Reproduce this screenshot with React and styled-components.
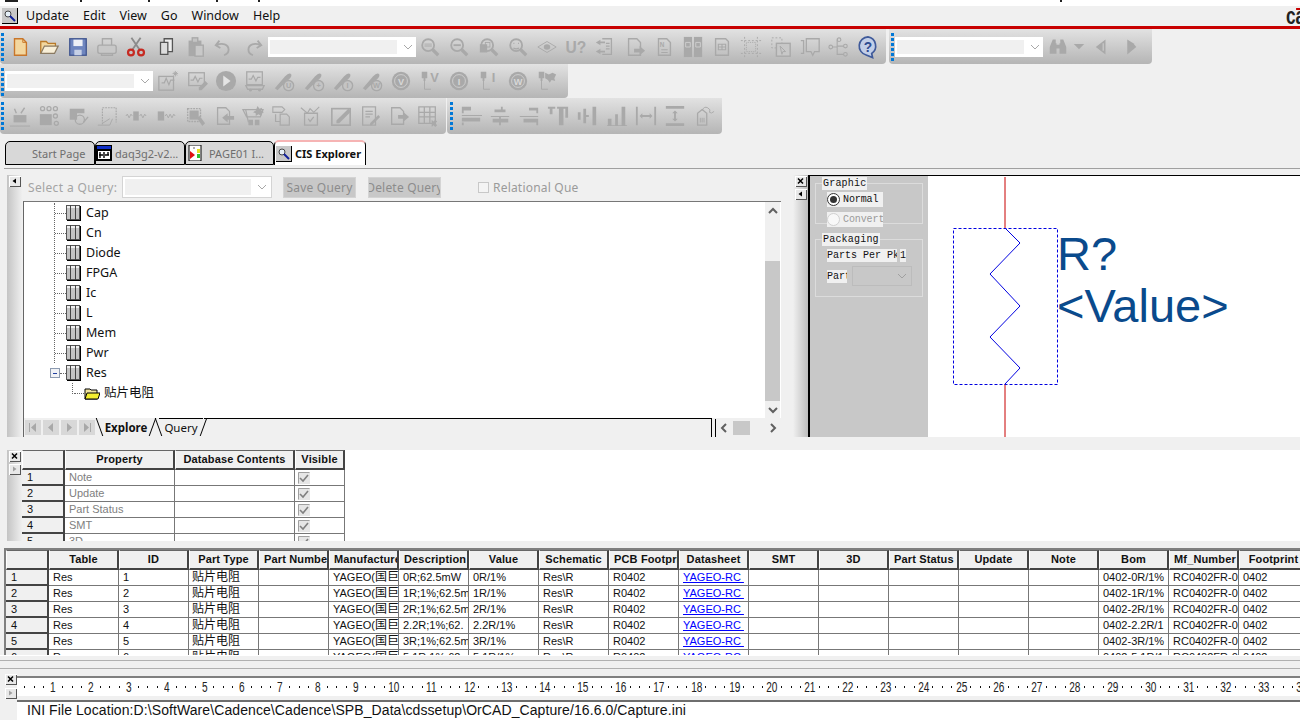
import React from 'react';
import styled, {createGlobalStyle} from 'styled-components';

const UI = `"Noto Sans", "Noto Sans CJK SC", sans-serif`;
const ARIAL = `"Liberation Sans", "Noto Sans CJK SC", sans-serif`;
const MONO = `"Liberation Mono", monospace`;

const Global = createGlobalStyle`
	html, body {margin: 0; padding: 0; background: #f0f0f0;}
	#root {width: 1300px; height: 720px; overflow: hidden;}
`;

/* icons */
const Solid = props => <path fill="currentColor" stroke="none" {...props} />;
const Letter = ({x = 12, y = 16, s = 12, fill = '#f0f0f0', children}) => (
	<text x={x} y={y} fontSize={s} fontWeight="700" textAnchor="middle" fontFamily="Liberation Sans, sans-serif" fill={fill} stroke="none">{children}</text>
);
const Glass = ({children}) => (
	<>
		<circle cx="10" cy="10" r="6.5" strokeWidth="2" />
		<path d="M15 15l6 6" strokeWidth="3.5" />
		{children}
	</>
);
const Probe = ({label}) => (
	<>
		<Solid d="M2 20L13 7q5-5 7-2q1 3-5 7L5 22z" />
		<circle cx="17" cy="17" r="5.5" fill="#c4c4c4" strokeWidth="1.5" />
		<Letter x={17} y={20} s={8} fill="#a9a9a9">{label}</Letter>
	</>
);
const Ball = ({label}) => (
	<>
		<circle cx="12" cy="12" r="10" fill="currentColor" stroke="none" />
		<circle cx="12" cy="12" r="7" strokeWidth="1" stroke="#d0d0d0" />
		<Letter y={16} s={10} fill="#d8d8d8">{label}</Letter>
	</>
);
const Marker = ({children}) => (
	<>
		<Solid d="M3 2h6v7H7v3H5V9H3z" />
		<path d="M6 12v9h7" strokeWidth="1" />
		{children}
	</>
);
const Wave = () => <path d="M5 14h3l2-5 3 7 2-5h4" strokeWidth="1.3" />;
const Page = () => <path d="M6 3h9l4 4v14H6z" strokeWidth="1.5" />;

const ICONS = {
	newFile: <><path d="M6 3h9l4 4v14H6z" fill="#f3d79f" stroke="#c8762a" strokeWidth="1.5" /><path d="M15 3v4h4" stroke="#c8762a" /></>,
	open: <><path d="M3 19V6h6l2 2h8v3" fill="#f3d79f" stroke="#b97a2a" strokeWidth="1.4" /><path d="M3 19l4-8h15l-4 8z" fill="#f8efd8" stroke="#8a7a62" strokeWidth="1.4" /></>,
	save: <><rect x="3" y="3" width="18" height="18" fill="#6f86bf" stroke="#40558f" strokeWidth="1.4" /><rect x="7" y="4" width="10" height="7" fill="#eef0f6" stroke="none" /><rect x="8" y="15" width="8" height="6" fill="#c6d0e6" stroke="none" /></>,
	print: <><path d="M7 10V3h10v7" strokeWidth="1.5" /><rect x="2" y="10" width="20" height="9" rx="2" fill="#c8c8c8" strokeWidth="1.5" /><path d="M6 19v2h12v-2" strokeWidth="1.5" /></>,
	cut: <><path d="M7 2l9 13M17 2L8 15" stroke="#8b8b8b" strokeWidth="2" /><circle cx="6.5" cy="18" r="3.2" stroke="#c62a22" strokeWidth="2.4" /><circle cx="17.5" cy="18" r="3.2" stroke="#c62a22" strokeWidth="2.4" /></>,
	copy: <g stroke="#555"><path d="M10 3h9v14H10z" fill="#eee" strokeWidth="1.4" /><path d="M6 7h8v13H6z" fill="#ddd" strokeWidth="1.4" /></g>,
	paste: <><path d="M5 5h14v17H5z" fill="currentColor" stroke="none" /><rect x="9" y="2" width="6" height="5" strokeWidth="1.5" fill="#c4c4c4" /><rect x="12" y="10" width="9" height="12" fill="#c8c8c8" strokeWidth="1.5" /></>,
	undo: <path d="M7 5L3 10l5 3M4 10c6-3 13-1 13 5 0 3-2 5-5 6" strokeWidth="2" />,
	redo: <path d="M17 5l4 5-5 3M20 10c-6-3-13-1-13 5 0 3 2 5 5 6" strokeWidth="2" />,
	zoom: <Glass><Solid d="M6 8h8v4H6z" opacity=".5" /></Glass>,
	zoomOut: <Glass><Solid d="M6 9h8v2H6z" /></Glass>,
	zoomArea: <Glass><rect x="2" y="9" width="8" height="9" fill="currentColor" stroke="none" /><rect x="8" y="7" width="5" height="5" strokeWidth="1" /></Glass>,
	zoomFit: <Glass><rect x="7" y="7" width="6" height="6" strokeWidth="1.2" /></Glass>,
	zoomAll: <Glass><path d="M7 8h1M12 8h1M7 13q3 2 6 0" strokeWidth="1.4" /></Glass>,
	eye: <><path d="M2 12l10-6 10 6-10 6z" strokeWidth="1" /><ellipse cx="12" cy="12" rx="3.5" ry="3" fill="currentColor" stroke="none" /></>,
	uRef: <Letter y={18} s={17} fill="currentColor">U?</Letter>,
	netlist: <><path d="M9 3h10v17H9" strokeWidth="1.4" /><Solid d="M2 7l5-3v2h5v2H7v2zM2 17l5-3v2h5v2H7v2z" /><path d="M13 8h4M13 11h4M13 14h4" strokeWidth="1.2" /></>,
	pageArrow: <><path d="M5 3h9l4 4v14H5z" strokeWidth="1.5" /><Solid d="M11 14h6v-3l6 5-6 5v-3h-6z" /></>,
	note: <><Page /><Letter x={10} y={12} s={7} fill="currentColor">N</Letter><path d="M9 15h7M9 18h7" strokeWidth="1.2" /></>,
	chips: <><rect x="2" y="1" width="9" height="22" fill="currentColor" stroke="none" /><rect x="13" y="1" width="9" height="22" fill="currentColor" stroke="none" /><path d="M4 7h5v5H4zM15 7h5v5h-5z" stroke="#d0d0d0" strokeWidth="1" /></>,
	docTable: <><path d="M5 3h11l3 3v15H5z" strokeWidth="1.5" /><path d="M8 9h8v6H8zM8 12h8M12 9v6" strokeWidth="1.2" /></>,
	dotGrid: <><path d="M1 5h22M1 19h22M5 1v22M19 1v22" strokeWidth="1" strokeDasharray="2 2" /><rect x="7" y="7" width="10" height="10" strokeWidth="1" strokeDasharray="1 1" /></>,
	dashPage: <><rect x="2" y="2" width="11" height="11" strokeWidth="1" strokeDasharray="2 2" /><rect x="7" y="8" width="15" height="14" fill="#c8c8c8" strokeWidth="1.5" /><path d="M11 11l6 6-3 0-1 3z" strokeWidth="1" /></>,
	brace: <><path d="M2 5h3v14H2M8 3h14v14h-5l-2 4-2-4H8z" strokeWidth="1.4" /></>,
	tree: <><circle cx="12" cy="4" r="2" strokeWidth="1.2" /><circle cx="19" cy="11" r="2" strokeWidth="1.2" /><circle cx="19" cy="20" r="2" strokeWidth="1.2" /><circle cx="3" cy="12" r="2" strokeWidth="1.2" /><path d="M5 12h5M10 4v16h7M10 11h7M10 4h1" strokeWidth="1.2" /></>,
	help: <><path d="M12 1a10 10 0 0 0-2 19.7l7 2.8-1-4.4A10 10 0 0 0 12 1z" fill="#c3cfe8" stroke="#3f5a9a" strokeWidth="1.8" /><Letter y={17} s={15} fill="#2f4a90">?</Letter></>,
	binoculars: <Solid d="M5 2h4v5h1v14H1V12zM15 2h4l4 10v9h-9V7h1zM10 9h4v5h-4z" />,
	dropDown: <Solid d="M3 7h18l-9 9z" />,
	prevFind: <><Solid d="M18 2v20L5 12z" /><path d="M15 7v10" stroke="#c4c4c4" strokeWidth="2" /></>,
	nextFind: <Solid d="M7 2l8 5 4 5-12 10z" />,
	waveNew: <><rect x="2" y="7" width="16" height="15" strokeWidth="1.4" /><Wave /><path d="M20 1v6M17 4h6M18 2l4 4M22 2l-4 4" strokeWidth="1" /></>,
	waveEdit: <><rect x="3" y="3" width="17" height="14" strokeWidth="1.4" /><path d="M5 11h3l2-4 3 6 2-4h3" strokeWidth="1.3" /><Solid d="M14 19l7-7 3 3-7 7h-3z" /></>,
	play: <><circle cx="12" cy="12" r="11" fill="currentColor" stroke="none" /><path d="M9 6l8 6-8 6z" fill="#e4e4e4" stroke="none" /></>,
	waveCart: <><rect x="3" y="2" width="17" height="14" strokeWidth="1.4" /><path d="M5 10h3l2-4 3 6 2-4h3" strokeWidth="1.3" /><path d="M2 17h20l-2 4H4z" strokeWidth="1.4" /><circle cx="7" cy="22" r="1.5" fill="currentColor" stroke="none" /><circle cx="17" cy="22" r="1.5" fill="currentColor" stroke="none" /></>,
	probeU: <Probe label="U" />,
	probePlus: <Probe label="+" />,
	probeI: <Probe label="I" />,
	probeW: <Probe label="W" />,
	ballV: <Ball label="V" />,
	ballI: <Ball label="I" />,
	ballW: <Ball label="W" />,
	markV: <Marker><Letter x={17} y={13} s={14} fill="currentColor">V</Letter></Marker>,
	markI: <Marker><Letter x={17} y={13} s={14} fill="currentColor">I</Letter></Marker>,
	markF: <Marker><Solid d="M10 3l4 2 4-2 4 2-2 4 1 3-4-1-2 3-2-3-3-2z" /></Marker>,
	basket: <><Solid d="M5 11h14v8H5z" /><path d="M8 9l-2-5M13 9l4-6" strokeWidth="1.5" /><path d="M1 23h22" strokeWidth="1" /></>,
	blocks: <><Solid d="M2 10h13v12H2z" /><circle cx="5" cy="4" r="2.2" strokeWidth="1.4" /><circle cx="12" cy="4" r="2.2" strokeWidth="1.4" /><circle cx="19" cy="4" r="2.2" strokeWidth="1.4" /><circle cx="19" cy="12" r="2.2" strokeWidth="1.4" /><circle cx="20" cy="20" r="2.2" strokeWidth="1.4" /></>,
	blockPen: <><Solid d="M3 4h16v5H11v7H3z" /><circle cx="14" cy="16" r="5" strokeWidth="1.4" /><path d="M18 19l5-6" strokeWidth="1.5" /></>,
	dashedBox: <><path d="M7 21V3h15v16" strokeWidth="1.3" strokeDasharray="2 1" /><path d="M2 22h13l3-7" strokeWidth="1" /><path d="M7 20l8-5" strokeWidth="1" /></>,
	chain: <><Solid d="M9 7h6v10H9z" /><path d="M1 12l1.5-2 2 4 2-4 1.5 2M16 12l1.5-2 2 4 2-4 1.5 2" strokeWidth="1" /></>,
	chainShort: <><Solid d="M3 7h7v10H3z" /><path d="M11 12l1.5-2 2 4 2-4 2 4 2-4 1.5 2" strokeWidth="1" /></>,
	chipPat: <><path d="M4 4h14v14H4z" strokeDasharray="2 1" strokeWidth="1.5" /><Solid d="M6 6h10v10H6z" /><Solid d="M14 14l3-2 6 8-3 3z" /></>,
	pageIn: <><path d="M5 3h9l4 4v14H5z" strokeWidth="1.4" /><Solid d="M23 12v4h-7v3l-6-5 6-5v3z" /></>,
	cart: <><path d="M1 5h22l-3 8H5zM4 5l3 14" strokeWidth="1.3" /><Solid d="M7 16h5v6H7zM14 16h5v6h-5z" /><Solid d="M17 1l2 3 3-1-1 3 3 2-3 1 0 3-3-2-3 2 0-3-3-1 3-2z" /></>,
	tagPages: <><path d="M2 2h10l3 3-3 3H2z" strokeWidth="1.2" /><path d="M10 10h7l3 3v9H10zM5 10v8h5" strokeWidth="1.3" /></>,
	antenna: <><path d="M5 9h14v13H5z" strokeWidth="1.4" /><path d="M1 3l7 6 3-5 4 4 6-6" strokeWidth="1.2" /><path d="M9 15l2 3 4-5" strokeWidth="1.4" /></>,
	penBox: <><rect x="2" y="4" width="20" height="18" strokeWidth="1.8" /><Solid d="M7 17L20 4l3 3-13 13H7z" /></>,
	notePen: <><path d="M4 2h14v20H4z" strokeWidth="1.4" /><path d="M7 7h8M7 10h8M7 13h5" strokeWidth="1.2" /><Solid d="M12 20l9-9 2 2-9 9h-2z" /></>,
	pageOut: <><path d="M4 3h9l4 4v14H4z" strokeWidth="1.4" /><Solid d="M11 11h6V8l6 5-6 5v-3h-6z" /></>,
	tableX: <><path d="M2 2h18v18H2zM2 8h18M2 13h18M8 2v18M14 2v18" strokeWidth="1.4" /><Solid d="M16 16l2 2 2-2 2 2-2 2 2 2-2 2-2-2-2 2z" /></>,
	alignLeft: <Solid d="M2 2h10v4H4v3H2zM2 11h22v1H2zM2 14h20v4H2zM2 19h2v3H2z" />,
	alignCenter: <Solid d="M6 5h7V2h2v3h3v3H6zM2 12h20v1H2zM4 15h7v-2h2v2h8v4H4zM11 19h2v3h-2z" />,
	alignRight: <Solid d="M12 3h10v3H12zM20 6h2v3h-2zM2 12h20v1H2zM6 15h16v4H6zM20 19h2v3h-2z" />,
	alignTop: <Solid d="M1 2h8v2H1zM11 2h12v2H11zM3 4h3v6H3zM13 4h5v18h-5zM20 4h3v10h-3z" />,
	alignMid: <Solid d="M2 8h3v8H2zM8 4h3v16H8zM11 11h3v2h-3zM18 2h4v20h-4z" />,
	alignBottom: <Solid d="M2 15h4v7H2zM10 10h3v12h-3zM17 2h4v20h-4zM1 22h22v1H1z" />,
	hSpace: <><Solid d="M1 2h2v20H1zM21 2h2v20h-2z" /><Solid d="M5 12l3-3v2h8V9l3 3-3 3v-2H8v2z" /></>,
	vSpace: <><Solid d="M2 1h20v3H2zM2 20h20v3H2z" /><Solid d="M12 6l3 3h-2v6h2l-3 3-3-3h2V9H9z" /></>,
	tag: <><path d="M5 9l5-4 5 4v13H5z" strokeWidth="1.4" /><path d="M8 14v5M10 14v5M12 14v5" strokeWidth="1" /><path d="M10 6q2-5 6-3t2 5q2 2 5-1" strokeWidth="1" /></>,
};

const ROW_ONE_LEFT = ['newFile', 'open', 'save', 'print', 'cut', 'copy', 'paste', 'undo', 'redo'];
const ROW_ONE_RIGHT = ['zoom', 'zoomOut', 'zoomArea', 'zoomAll', 'eye', 'uRef', 'netlist', 'pageArrow', 'note', 'chips', 'docTable', 'dotGrid', 'dashPage', 'brace', 'tree', 'help'];
const ROW_TWO = ['waveNew', 'waveEdit', 'play', 'waveCart', 'probeU', 'probePlus', 'probeI', 'probeW', 'ballV', 'markV', 'ballI', 'markI', 'ballW', 'markF'];
const ROW_THREE = ['basket', 'blocks', 'blockPen', 'dashedBox', 'chain', 'chainShort', 'chipPat', 'pageIn', 'cart', 'tagPages', 'antenna', 'penBox', 'notePen', 'pageOut', 'tableX'];
const ROW_ALIGN = ['alignLeft', 'alignCenter', 'alignRight', 'alignTop', 'alignMid', 'alignBottom', 'hSpace', 'vSpace', 'tag'];

const Page0 = styled.div`
	width: 1300px;
	height: 720px;
	overflow: hidden;
	display: flex;
	flex-direction: column;
	background: #f0f0f0;
	font-family: ${UI};
`;

const TitleStrip = styled.div`
	height: 6px;
	flex: none;
	background: #fff;
	display: flex;
	align-items: flex-start;
`;
const Speck = styled.span`
	width: ${p => p.$w}px;
	height: ${p => p.$h || 2}px;
	margin-left: ${p => p.$at}px;
	background: #222;
`;

const MenuBar = styled.div`
	height: 20px;
	flex: none;
	display: flex;
	align-items: center;
	padding-left: 2px;
	overflow: hidden;
`;
const MenuItem = styled.span`
	font-size: 12.5px;
	color: #111;
	margin-left: ${p => p.$gap}px;
	line-height: 18px;
`;
const Brand = styled.span`
	margin: 0 -6px 0 auto;
	width: 20px;
	position: relative;
	overflow: hidden;
	font: 700 24px/20px ${ARIAL};
	color: #222;
	white-space: nowrap;
	transform: scaleX(.72);
	transform-origin: left center;
	&::after {
		content: '';
		position: absolute;
		top: 2px;
		right: 0;
		width: 6px;
		height: 2px;
		background: #c80000;
	}
`;
const RedLine = styled.div`
	height: 3px;
	flex: none;
	background: #c80000;
`;

const ToolRow = styled.div`
	display: flex;
	height: ${p => p.$h}px;
	flex: none;
	gap: ${p => p.$gap || 0}px;
`;
const Toolbar = styled.div`
	width: ${p => p.$w}px;
	flex: none;
	display: flex;
	align-items: center;
	padding-left: ${p => p.$pad || 1}px;
	box-sizing: border-box;
	background: linear-gradient(#e2e2e2, #b5b5b5);
	border-radius: 0 0 4px 4px;
`;
const Grip = styled.div`
	width: 3px;
	margin-right: ${p => p.$after || 1}px;
	flex: none;
	height: 28px;
	background: repeating-linear-gradient(#0078d7 0 3px, transparent 3px 5px);
	align-self: flex-start;
	margin-top: 4px;
`;
const Combo = styled.div`
	width: 148px;
	height: 20px;
	flex: none;
	box-sizing: border-box;
	background: #fff;
	padding: 3px 2px;
	display: flex;
	align-items: center;
`;
const ComboFill = styled.div`
	flex: none;
	width: 127px;
	height: 100%;
	background: #f0f0f0;
`;
const Chevron = styled.svg`
	width: 10px;
	height: 6px;
	margin-left: 6px;
	fill: none;
	stroke: ${p => p.$color || '#a8a8a8'};
	stroke-width: 1;
`;
const ToolSlot = styled.div`
	width: ${p => p.$w || 29.2}px;
	flex: none;
	display: flex;
	justify-content: center;
	color: #a9a9a9;
`;
const ToolGlyph = styled.svg`
	width: ${p => p.$size || 22}px;
	height: ${p => p.$size || 22}px;
	fill: none;
	stroke: currentColor;
	overflow: visible;
`;

function Tool({name, w, size}) {
	return (
		<ToolSlot $w={w}>
			<ToolGlyph viewBox="0 0 24 24" $size={size}>{ICONS[name]}</ToolGlyph>
		</ToolSlot>
	);
}
const Tools = ({names}) => names.map(n => <Tool key={n} name={n} />);
const ChevronDown = ({color}) => <Chevron viewBox="0 0 10 6" $color={color}><path d="M1 1l4 4 4-4" /></Chevron>;
const ToolCombo = () => <Combo><ComboFill /><ChevronDown /></Combo>;

const TabStrip = styled.div`
	display: flex;
	height: 24px;
	flex: none;
	margin-top: 7px;
	padding-left: 5px;
`;
const Tab = styled.div`
	width: ${p => p.$w}px;
	flex: none;
	box-sizing: border-box;
	display: flex;
	align-items: center;
	gap: 3px;
	padding-left: ${p => p.$pad || 0}px;
	border: 1px solid #000;
	border-radius: 5px 5px 0 0;
	background: ${p => p.$active ? '#fff' : '#d8d8d8'};
	color: ${p => p.$active ? '#111' : '#6e6e6e'};
	font-size: 11px;
	font-weight: ${p => p.$active ? 700 : 400};
	white-space: nowrap;
	${p => p.$active && `
		border-top: 2px solid #f6b4b4;
		border-bottom: 0;
		height: 25px;
		margin-top: -1px;
	`}
`;
const TabLabel = styled.span`
	margin-left: ${p => p.$gap || 0}px;
`;
const SmallPic = styled.svg`
	width: 16px;
	height: ${p => p.$h || 16}px;
	flex: none;
`;

const MagnifierPic = ({h}) => (
	<SmallPic viewBox="0 0 16 16" $h={h}>
		<rect x="0" y="0" width="16" height="16" fill="#000" />
		<rect x="0" y="0" width="15" height="15" fill="#c8c8c8" />
		<circle cx="6" cy="6" r="3" fill="#e6f0f8" stroke="#444" />
		<path d="M8 8l5 5" stroke="#10209a" strokeWidth="2" />
	</SmallPic>
);
const SchematicPic = () => (
	<SmallPic viewBox="0 0 16 16">
		<rect width="16" height="16" fill="#000" />
		<rect x="1" y="1" width="14" height="3" fill="#1030c8" />
		<rect x="2" y="6" width="12" height="8" fill="#fff" />
		<path d="M4 7v6M8 7v6M12 7v3M3 10h4M9 10h4" stroke="#000" strokeWidth="1.4" />
	</SmallPic>
);
const PagePic = () => (
	<SmallPic viewBox="0 0 16 16">
		<rect x="1" y="0" width="12" height="16" fill="#fff" stroke="#000" />
		<path d="M2 6l5 4-5 4z" fill="#e01010" />
		<rect x="9" y="4" width="3" height="4" fill="#e8e020" />
		<rect x="9" y="9" width="3" height="4" fill="#30c030" />
		<rect x="5" y="2" width="2" height="2" fill="#b0b0b0" />
	</SmallPic>
);

const TabRule = styled.div`
	height: 1px;
	flex: none;
	margin: 3px 0 6px 4px;
	background: #a0a0a0;
`;

const Main = styled.div`
	display: flex;
	height: 262px;
	flex: none;
	padding-left: 7px;
`;
const DockEdge = styled.div`
	width: ${p => p.$w || 15}px;
	flex: none;
	display: flex;
	flex-direction: column;
	align-items: center;
	gap: ${p => p.$gap || 2}px;
	padding-top: ${p => p.$top || 1}px;
	box-sizing: border-box;
	background: ${p => p.$plain ? 'none' : p.$flip
		? 'linear-gradient(90deg, #f0f0f0, #bdbdbd)'
		: 'linear-gradient(90deg, #c4c4c4, #efefef)'};
`;
const DockBtn = styled.svg`
	width: 12px;
	height: 11px;
	flex: none;
	background: #e8e8e8;
	box-shadow: inset 1px 1px 0 #fff, inset -1px -1px 0 #555;
`;
const DockClose = () => <DockBtn viewBox="0 0 12 11"><path d="M3 2.5l5 5M8 2.5l-5 5" stroke="#000" strokeWidth="1.5" /></DockBtn>;
const DockLeft = () => <DockBtn viewBox="0 0 12 11"><path d="M7 2.5v5L3.5 5z" fill="#000" /></DockBtn>;
const DockRight = () => <DockBtn viewBox="0 0 12 11"><path d="M4 2.5v5L7.5 5z" fill="#a0a0a0" /></DockBtn>;

const QueryPanel = styled.div`
	width: 760px;
	flex: none;
	display: flex;
	flex-direction: column;
`;
const QueryBar = styled.div`
	height: 26px;
	flex: none;
	box-sizing: border-box;
	padding: 0 0 2px 6px;
	display: flex;
	align-items: center;
	color: #a4a4a4;
	font-size: 12px;
	white-space: nowrap;
`;
const QueryLabel = styled.span`
	width: 94px;
	flex: none;
	letter-spacing: .35px;
`;
const QueryCombo = styled(Combo)`
	width: 150px;
	height: 22px;
	border: 1px solid #d4d4d4;
	padding: 2px 2px;
`;
const QueryFill = styled(ComboFill)`
	width: 126px;
`;
const QueryBtn = styled.div`
	width: 73px;
	height: 21px;
	flex: none;
	margin-left: ${p => p.$gap}px;
	background: #c8c8c8;
	border: 1px solid #d4d4d4;
	box-sizing: border-box;
	display: flex;
	justify-content: center;
	align-items: center;
	overflow: hidden;
	color: #8c8c8c;
	letter-spacing: .2px;
`;
const CheckBoxBlank = styled.span`
	width: 11px;
	height: 11px;
	flex: none;
	margin: 0 4px 0 37px;
	border: 1px solid #c8c8c8;
	background: #f4f4f4;
	box-sizing: border-box;
`;
const RelationText = styled.span`
	letter-spacing: .2px;
	color: #9a9a9a;
`;
const TreeBox = styled.div`
	flex: 1;
	min-height: 0;
	margin-left: 1px;
	margin-right: 1px;
	border-top: 1px solid #777;
	border-left: 1px solid #666;
	background: #fff;
	display: flex;
	flex-direction: column;
`;
const TreeWrap = styled.div`
	height: 216px;
	flex: none;
	display: flex;
`;
const Tree = styled.div`
	flex: 1;
	overflow: hidden;
	font-size: 12.5px;
	color: #111;
	padding-top: 1px;
`;
const Branch = styled.div`
	margin-left: 30px;
	border-left: 1px dotted #666;
	height: 160px;
`;
const TreeRow = styled.div`
	height: 20px;
	display: flex;
	align-items: center;
	padding-left: ${p => p.$pad || 0}px;
`;
const Connector = styled.span`
	width: ${p => p.$w}px;
	flex: none;
	border-top: 1px dotted #666;
`;
const TreeText = styled.span`
	margin-left: ${p => p.$gap}px;
	line-height: 20px;
`;
const ExpandBox = styled.span`
	width: 8px;
	height: 8px;
	flex: none;
	border: 1px solid #8c9ab0;
	background: #f0f2f6;
	display: flex;
	align-items: center;
	justify-content: center;
	&::after {content: ''; width: 4px; height: 1px; background: #2040a0;}
`;
const ChildDrop = styled.span`
	width: 1px;
	height: 11px;
	flex: none;
	align-self: flex-start;
	border-left: 1px dotted #666;
`;
const TablePic = styled.svg`
	width: 15px;
	height: 16px;
	flex: none;
`;
const FolderPic = styled.svg`
	width: 16px;
	height: 13px;
	flex: none;
`;
const TableIcon = () => (
	<TablePic viewBox="0 0 15 16">
		<rect x="1" y="1" width="14" height="15" fill="#000" />
		<rect x=".5" y=".5" width="13" height="14" fill="#c4c4c4" stroke="#555" />
		<path d="M1 1h12v2H1z" fill="#eee" />
		<path d="M4.5 0v15M9.5 0v15" stroke="#444" />
	</TablePic>
);
const FolderIcon = () => (
	<FolderPic viewBox="0 0 16 13">
		<path d="M1 12V2h5l1 1h6v9z" fill="#f0e4a0" stroke="#000" />
		<path d="M1 12l2-6h13l-2 6z" fill="#f4ee30" stroke="#000" />
	</FolderPic>
);

const Scrollbar = styled.div`
	width: 15px;
	flex: none;
	margin-right: 1px;
	background: #f0f0f0;
	display: flex;
	flex-direction: column;
`;
const ScrollArrow = styled.div`
	height: ${p => p.$h}px;
	flex: none;
	display: flex;
	justify-content: center;
	align-items: center;
`;
const ScrollThumb = styled.div`
	height: ${p => p.$h}px;
	background: #c8c8c8;
	flex: none;
`;
const ScrollGap = styled.div`
	height: ${p => p.$h}px;
	flex: none;
`;
const ArrowPic = styled.svg`
	width: 10px;
	height: 10px;
	flex: none;
	fill: none;
	stroke: #606060;
	stroke-width: 2;
`;
const Arrow = ({d}) => <ArrowPic viewBox="0 0 10 10"><path d={d} /></ArrowPic>;

const SheetBar = styled.div`
	flex: 1;
	display: flex;
	background: #f0f0f0;
	font-size: 11.5px;
	color: #111;
`;
const NavGroup = styled.div`
	display: flex;
	gap: 2px;
	padding: 2px 0 0 1px;
	flex: none;
`;
const NavBtn = styled.svg`
	width: 16px;
	height: 15px;
	background: #d8d8d8;
	flex: none;
`;
const SheetTab = styled.div`
	flex: none;
	width: ${p => p.$w}px;
	height: 17px;
	font-weight: ${p => p.$on ? 700 : 400};
	display: flex;
	align-items: center;
	justify-content: center;
	border-top: ${p => p.$on ? '1px solid transparent' : '1px solid #000'};
	box-sizing: content-box;
`;
const Slant = styled.span`
	width: 0;
	height: 18px;
	flex: none;
	margin-left: ${p => p.$gap || 0}px;
	border-left: 1px solid #000;
	transform: skewX(${p => p.$deg}deg);
`;
const SheetLine = styled.div`
	width: 507px;
	flex: none;
	border-top: 1px solid #000;
	border-right: 1px solid #000;
`;
const SheetEnd = styled.div`
	flex: 1;
	display: flex;
	align-items: center;
	margin-left: 3px;
	border-left: 1px solid #000;
	margin-top: 1px;
	padding: 0 3px;
`;
const HThumb = styled.div`
	width: 17px;
	height: 14px;
	background: #c8c8c8;
	margin: 0 auto 0 4px;
`;

const CanvasDock = styled.div`
	flex: 1;
	display: flex;
	margin-left: 11px;
	min-width: 0;
`;
const DockPanel = styled.div`
	flex: 1;
	display: flex;
	border-left: 2px solid #000;
	border-top: 1px solid #000;
	min-width: 0;
`;
const FormPane = styled.div`
	width: 118px;
	flex: none;
	background: #c8c8c8;
	padding: 1px 5px 0;
	box-sizing: border-box;
	font: 10px/14px ${MONO};
	color: #111;
`;
const Group = styled.fieldset`
	margin: 0 0 9px;
	padding: 0 0 0 11px;
	border: 1px solid #dcdcdc;
	height: ${p => p.$h}px;
	box-sizing: border-box;
	min-width: 0;
`;
const GroupTitle = styled.legend`
	padding: 0 1px;
	margin-left: -5px;
	background: #f0f0f0;
	font: 10px/13px ${MONO};
	letter-spacing: .2px;
	height: 13px;
`;
const RadioRow = styled.div`
	width: 56px;
	height: 15px;
	display: flex;
	align-items: center;
	background: #f0f0f0;
	gap: 3px;
	margin-top: ${p => p.$top || 0}px;
	color: ${p => p.$off ? '#9a9a9a' : '#111'};
	letter-spacing: -.1px;
	white-space: nowrap;
	overflow: hidden;
`;
const Radio = styled.span`
	width: 11px;
	height: 11px;
	flex: none;
	border-radius: 50%;
	border: 1px solid ${p => p.$off ? '#d0d0d0' : '#333'};
	background: ${p => p.$off ? '#f8f8f8' : '#fff'};
	display: flex;
	align-items: center;
	justify-content: center;
	&::after {
		content: '';
		width: 7px;
		height: 7px;
		border-radius: 50%;
		background: ${p => p.$off ? 'transparent' : '#333'};
	}
`;
const FieldRow = styled.div`
	display: flex;
	align-items: center;
	gap: ${p => p.$gap || 3}px;
	margin-top: ${p => p.$top || 0}px;
`;
const FieldLabel = styled.span`
	background: #f0f0f0;
	line-height: 13px;
	white-space: nowrap;
	overflow: hidden;
	width: ${p => p.$w}px;
	flex: none;
`;
const FieldCombo = styled.div`
	width: 60px;
	height: 20px;
	flex: none;
	box-sizing: border-box;
	border: 1px solid #bcbcbc;
	display: flex;
	align-items: center;
	justify-content: flex-end;
	padding-right: 4px;
	& svg {margin: 0;}
`;
const Canvas = styled.svg`
	flex: 1;
	height: 261px;
	background: #fff;
	min-width: 0;
`;

const PropDock = styled.div`
	display: flex;
	height: 91px;
	flex: none;
	margin-top: 13px;
	padding-left: 7px;
`;
const PropPane = styled.div`
	flex: 1;
	background: #fff;
	overflow: hidden;
`;
const GridRow = styled.div`
	display: flex;
	height: ${p => p.$h || 16}px;
	flex: none;
`;
const HeadCell = styled.div`
	width: ${p => p.$w}px;
	flex: none;
	box-sizing: border-box;
	background: #f0f0f0;
	border-top: 1px solid #666;
	border-right: 2px solid #444;
	border-bottom: 2px solid #444;
	border-left: 1px solid #fff;
	padding: 0 4px;
	font: 700 11px/17px ${ARIAL};
	letter-spacing: .15px;
	color: #111;
	text-align: center;
	white-space: nowrap;
	overflow: hidden;
`;
const IndexCell = styled.div`
	width: ${p => p.$w}px;
	flex: none;
	box-sizing: border-box;
	background: #f0f0f0;
	border-right: 2px solid #444;
	border-bottom: 2px solid #444;
	padding-left: 5px;
	font: 11px/14px ${ARIAL};
	color: #111;
`;
const Cell = styled.div`
	width: ${p => p.$w}px;
	flex: none;
	box-sizing: border-box;
	border-right: 1px solid #777;
	border-bottom: 1px solid #777;
	padding-left: ${p => p.$pad || 4}px;
	font: 11px/15px ${ARIAL};
	color: ${p => p.$muted ? '#808080' : '#111'};
	white-space: nowrap;
	overflow: hidden;
`;
const CjkRun = styled.span`
	font: 12px/0 "Noto Sans CJK SC", sans-serif;
`;
const LinkText = styled.span`
	color: #0000ff;
	text-decoration: underline;
`;
const TickBox = styled.svg`
	width: 12px;
	height: 12px;
	display: block;
	margin: 2px 0 0 -1px;
	background: #e6e6e6;
`;

const DataGrid = styled.div`
	height: 105px;
	flex: none;
	margin: 7px 0 0 4px;
	border-top: 2px solid #808080;
	border-left: 2px solid #808080;
	background: #fff;
	overflow: hidden;
`;

const Splitter = styled.div`
	height: 17px;
	flex: none;
	border-top: 1px solid #fff;
	box-sizing: border-box;
	display: flex;
	flex-direction: column;
`;
const Hairline = styled.div`
	height: 1px;
	flex: none;
	margin-top: ${p => p.$top}px;
	background: #b0b0b0;
`;

const BottomDock = styled.div`
	flex: 1;
	display: flex;
	padding-left: 4px;
	min-height: 0;
`;
const RulerStack = styled.div`
	flex: 1;
	min-width: 0;
	display: flex;
	flex-direction: column;
	padding-top: 4px;
`;
const Ruler = styled.div`
	height: 18px;
	flex: none;
	display: flex;
	padding-left: 3px;
	background: #fff;
	border-top: 2px solid #808080;
	overflow: hidden;
`;
const RulerCell = styled.div`
	width: 37.85px;
	flex: none;
	display: grid;
	grid-template-columns: repeat(4, minmax(0, 1fr));
	align-items: center;
	justify-items: center;
`;
const Tick = styled.span`
	width: 1px;
	height: 2px;
	background: #111;
`;
const RulerNum = styled.span`
	display: inline-block;
	font: 14px/17px ${ARIAL};
	color: #222;
	transform: scaleX(.72);
`;
const StatusLine = styled.div`
	flex: 1;
	margin-top: 4px;
	border-top: 2px solid #6e6e6e;
	background: #fff;
	padding-left: 10px;
	font: 14px/17px ${ARIAL};
	letter-spacing: .085px;
	color: #111;
	white-space: nowrap;
	overflow: hidden;
`;

const PROPS = ['Note', 'Update', 'Part Status', 'SMT', '3D'];
const PROP_COLS = [43, 110, 120, 50];

const GRID_HEAD = ['Table', 'ID', 'Part Type', 'Part Number', 'Manufacturer', 'Description', 'Value', 'Schematic', 'PCB Footprint', 'Datasheet', 'SMT', '3D', 'Part Status', 'Update', 'Note', 'Bom', 'Mf_Number', 'Footprint'];
const GRID_ROWS = [
	['1', '0R;62.5mW', '0R/1%', '0402-0R/1%'],
	['2', '1R;1%;62.5m', '1R/1%', '0402-1R/1%'],
	['3', '2R;1%;62.5m', '2R/1%', '0402-2R/1%'],
	['4', '2.2R;1%;62.', '2.2R/1%', '0402-2.2R/1'],
	['5', '3R;1%;62.5m', '3R/1%', '0402-3R/1%'],
	['6', '5.1R;1%;62.', '5.1R/1%', '0402-5.1R/1'],
];
const TREE = ['Cap', 'Cn', 'Diode', 'FPGA', 'Ic', 'L', 'Mem', 'Pwr'];
const RULER = Array.from({length: 34}, (_, i) => i + 1);

export default function App() {
	return (
		<Page0>
			<Global />
			<TitleStrip>
				<Speck $at={5} $w={13} />
				<Speck $at={62} $w={2} />
				<Speck $at={66} $w={2} />
				<Speck $at={66} $w={2} />
				<Speck $at={40} $w={2} />
				<Speck $at={800} $w={2} />
			</TitleStrip>
			<MenuBar>
				<MagnifierPic />
				<MenuItem $gap={8}>Update</MenuItem>
				<MenuItem $gap={14}>Edit</MenuItem>
				<MenuItem $gap={14}>View</MenuItem>
				<MenuItem $gap={14}>Go</MenuItem>
				<MenuItem $gap={14}>Window</MenuItem>
				<MenuItem $gap={14}>Help</MenuItem>
				<Brand>ca</Brand>
			</MenuBar>
			<RedLine />

			<ToolRow $h={35} $gap={3}>
				<Toolbar $w={886}>
					<Grip />
					<Tools names={ROW_ONE_LEFT} />
					<ToolCombo />
					<Tools names={ROW_ONE_RIGHT} />
				</Toolbar>
				<Toolbar $w={263} $pad={2}>
					<Grip />
					<ToolCombo />
					<Tool name="binoculars" w={30} size={18} />
					<Tool name="dropDown" w={12} size={14} />
					<Tool name="prevFind" w={32} size={18} />
					<Tool name="nextFind" w={28} size={18} />
				</Toolbar>
			</ToolRow>
			<ToolRow $h={34}>
				<Toolbar $w={568}>
					<Grip />
					<ToolCombo />
					<Tools names={ROW_TWO} />
				</Toolbar>
			</ToolRow>
			<ToolRow $h={36} $gap={1}>
				<Toolbar $w={446}>
					<Grip />
					<Tools names={ROW_THREE} />
				</Toolbar>
				<Toolbar $w={275} $pad={3}>
					<Grip $after={3} />
					<Tools names={ROW_ALIGN} />
				</Toolbar>
			</ToolRow>

			<TabStrip>
				<Tab $w={90} $pad={26}>Start Page</Tab>
				<Tab $w={90}><SchematicPic />daq3g2-v2...</Tab>
				<Tab $w={89} $pad={2}><PagePic /><TabLabel $gap={2}>PAGE01 I...</TabLabel></Tab>
				<Tab $w={92} $active $pad={1}><MagnifierPic />CIS Explorer</Tab>
			</TabStrip>
			<TabRule />

			<Main>
				<DockEdge><DockLeft /></DockEdge>
				<QueryPanel>
					<QueryBar>
						<QueryLabel>Select a Query:</QueryLabel>
						<QueryCombo><QueryFill /><ChevronDown /></QueryCombo>
						<QueryBtn $gap={11}>Save Query</QueryBtn>
						<QueryBtn $gap={12}>Delete Query</QueryBtn>
						<CheckBoxBlank />
						<RelationText>Relational Que</RelationText>
					</QueryBar>
					<TreeBox>
						<TreeWrap>
							<Tree>
								<Branch>
									{TREE.map(name => (
										<TreeRow key={name}>
											<Connector $w={11} />
											<TableIcon />
											<TreeText $gap={5}>{name}</TreeText>
										</TreeRow>
									))}
								</Branch>
								<TreeRow $pad={26}>
									<ExpandBox />
									<Connector $w={6} />
									<TableIcon />
									<TreeText $gap={5}>Res</TreeText>
								</TreeRow>
								<TreeRow $pad={48}>
									<ChildDrop />
									<Connector $w={10} />
									<FolderIcon />
									<TreeText $gap={4}>贴片电阻</TreeText>
								</TreeRow>
							</Tree>
							<Scrollbar>
								<ScrollArrow $h={17}><Arrow d="M1 7l4-4 4 4" /></ScrollArrow>
								<ScrollGap $h={42} />
								<ScrollThumb $h={140} />
								<ScrollArrow $h={17}><Arrow d="M1 3l4 4 4-4" /></ScrollArrow>
							</Scrollbar>
						</TreeWrap>
						<SheetBar>
							<NavGroup>
								<NavBtn viewBox="0 0 16 15"><path d="M4 3v9h1V3zM11 3v9L6 7.5z" fill="#a8a8a8" /></NavBtn>
								<NavBtn viewBox="0 0 16 15"><path d="M10 3v9L5 7.5z" fill="#a8a8a8" /></NavBtn>
								<NavBtn viewBox="0 0 16 15"><path d="M6 3v9l5-4.5z" fill="#a8a8a8" /></NavBtn>
								<NavBtn viewBox="0 0 16 15"><path d="M5 3v9l5-4.5zM11 3v9h1V3z" fill="#a8a8a8" /></NavBtn>
							</NavGroup>
							<Slant $deg={20} $gap={4} />
							<SheetTab $w={52} $on>Explore</SheetTab>
							<Slant $deg={-20} />
							<Slant $deg={20} $gap={5} />
							<SheetTab $w={44}>Query</SheetTab>
							<Slant $deg={-20} />
							<SheetLine />
							<SheetEnd>
								<Arrow d="M7 1L3 5l4 4" />
								<HThumb />
								<Arrow d="M3 1l4 4-4 4" />
							</SheetEnd>
						</SheetBar>
					</TreeBox>
				</QueryPanel>

				<CanvasDock>
					<DockEdge $flip><DockClose /><DockLeft /></DockEdge>
					<DockPanel>
						<FormPane>
							<Group $h={47}>
								<GroupTitle>Graphic</GroupTitle>
								<RadioRow $top={2}><Radio />Normal</RadioRow>
								<RadioRow $off $top={5}><Radio $off />Convert</RadioRow>
							</Group>
							<Group $h={64}>
								<GroupTitle>Packaging</GroupTitle>
								<FieldRow $top={3}>
									<FieldLabel $w={70}>Parts Per Pk</FieldLabel>
									<FieldLabel $w={6}>1</FieldLabel>
								</FieldRow>
								<FieldRow $top={4} $gap={5}>
									<FieldLabel $w={20}>Part</FieldLabel>
									<FieldCombo><ChevronDown color="#a0a0a0" /></FieldCombo>
								</FieldRow>
							</Group>
						</FormPane>
						<Canvas viewBox="0 0 372 261" preserveAspectRatio="xMinYMin">
							<path d="M77 1v51M77 208v53" stroke="#c80000" fill="none" />
							<rect x="25.5" y="52.5" width="104" height="156" fill="none" stroke="#0000e0" strokeDasharray="3 2" />
							<path d="M77 52l15 15-30 31 30 32-30 31 30 31-15 16" fill="none" stroke="#0000e0" />
							<text x="129" y="94" fontSize="47" fontFamily="Liberation Sans, sans-serif" fill="#0a4a8c">R?</text>
							<text x="129" y="146" fontSize="47" fontFamily="Liberation Sans, sans-serif" fill="#0a4a8c">&lt;Value&gt;</text>
						</Canvas>
					</DockPanel>
				</CanvasDock>
			</Main>

			<PropDock>
				<DockEdge><DockClose /><DockRight /></DockEdge>
				<PropPane>
					<GridRow $h={20}>
						<HeadCell $w={PROP_COLS[0]} />
						<HeadCell $w={PROP_COLS[1]}>Property</HeadCell>
						<HeadCell $w={PROP_COLS[2]}>Database Contents</HeadCell>
						<HeadCell $w={PROP_COLS[3]}>Visible</HeadCell>
					</GridRow>
					{PROPS.map((name, i) => (
						<GridRow key={name}>
							<IndexCell $w={PROP_COLS[0]}>{i + 1}</IndexCell>
							<Cell $w={PROP_COLS[1]} $muted>{name}</Cell>
							<Cell $w={PROP_COLS[2]} />
							<Cell $w={PROP_COLS[3]}>
								<TickBox viewBox="0 0 12 12"><path d="M2 6l3 3 5-6" fill="none" stroke="#808080" strokeWidth="1.6" /><path d="M.5 11.5V.5h11" fill="none" stroke="#a0a0a0" /></TickBox>
							</Cell>
						</GridRow>
					))}
				</PropPane>
			</PropDock>

			<DataGrid>
				<GridRow $h={20}>
					<HeadCell $w={43} />
					{GRID_HEAD.map(h => <HeadCell key={h} $w={70}>{h}</HeadCell>)}
				</GridRow>
				{GRID_ROWS.map(([id, desc, value, bom]) => (
					<GridRow key={id}>
						<IndexCell $w={43}>{id}</IndexCell>
						<Cell $w={70}>Res</Cell>
						<Cell $w={70}>{id}</Cell>
						<Cell $w={70} $pad={3}><CjkRun>贴片电阻</CjkRun></Cell>
						<Cell $w={70} />
						<Cell $w={70}>YAGEO(<CjkRun>国巨</CjkRun></Cell>
						<Cell $w={70}>{desc}</Cell>
						<Cell $w={70}>{value}</Cell>
						<Cell $w={70}>Res\R</Cell>
						<Cell $w={70}>R0402</Cell>
						<Cell $w={70}><LinkText>YAGEO-RC&nbsp;</LinkText></Cell>
						<Cell $w={70} />
						<Cell $w={70} />
						<Cell $w={70} />
						<Cell $w={70} />
						<Cell $w={70} />
						<Cell $w={70}>{bom}</Cell>
						<Cell $w={70}>RC0402FR-0</Cell>
						<Cell $w={70}>0402</Cell>
					</GridRow>
				))}
			</DataGrid>

			<Splitter>
				<Hairline $top={4} />
				<Hairline $top={7} />
			</Splitter>

			<BottomDock>
				<DockEdge $w={13} $plain $top={2} $gap={3}><DockClose /><DockRight /></DockEdge>
				<RulerStack>
					<Ruler>
						{RULER.map(n => (
							<RulerCell key={n}>
								<Tick /><Tick /><Tick />
								<RulerNum>{n}</RulerNum>
							</RulerCell>
						))}
					</Ruler>
					<StatusLine>INI File Location:D:\SoftWare\Cadence\Cadence\SPB_Data\cdssetup\OrCAD_Capture/16.6.0/Capture.ini</StatusLine>
				</RulerStack>
			</BottomDock>
		</Page0>
	);
}
